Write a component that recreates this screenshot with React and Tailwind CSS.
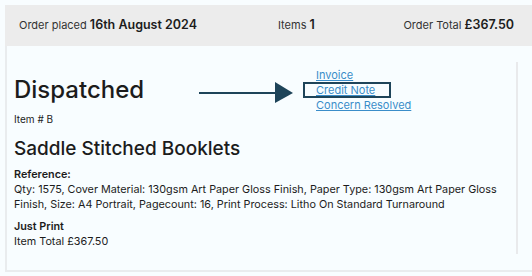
export default function App() {
  return (
    <div className="w-[532px] h-[276px] bg-[#f8fdff] pl-[5px] pt-[5px] overflow-hidden text-[#1c1c1c]" style={{ fontFamily: "Inter, 'Noto Sans', sans-serif" }}>
      <div className="flex h-[41px] items-center bg-[#ececec] pl-[14px] pr-[18px] text-[11px]">
        <div className="w-[259px]">
          <span className="text-[#333]">Order placed </span>
          <span className="text-[12.5px] font-semibold">16th August 2024</span>
        </div>
        <div>
          <span className="text-[#333]">Items </span>
          <span className="text-[12.5px] font-semibold">1</span>
        </div>
        <div className="ml-auto">
          <span className="text-[#333]">Order Total </span>
          <span className="text-[12.5px] font-semibold">£367.50</span>
        </div>
      </div>
      <div className="relative h-[226px] border-l-2 border-b-2 border-[#e9ecee] pl-[7px] pt-[29px]">
        <div className="absolute right-[14px] top-[16px] h-[192px] w-[2px] bg-[#e9eaec]" />
        <div className="flex">
          <div className="w-[302px]">
            <div className="relative h-[30px] text-[24px] leading-[30px] font-medium">
              Dispatched
              <svg className="absolute left-[185px] top-[7px]" width="96" height="22" viewBox="0 0 96 22">
                <rect x="0" y="10" width="78" height="2" fill="#1e4459" />
                <polygon points="76,0 94,11 76,21" fill="#1e4459" />
              </svg>
            </div>
            <div className="mt-[7px] text-[10px] leading-[14px]">Item # B</div>
          </div>
          <div className="-mt-[7px] flex flex-col text-[11px] leading-[15px] text-[#3a8dc9]">
            <a className="underline w-fit">Invoice</a>
            <div className="relative w-fit">
              <a className="underline">Credit Note</a>
              <span className="absolute left-[-13px] top-[-1px] h-[16px] w-[88px] border-2 border-[#1e4459]" />
            </div>
            <a className="underline w-fit">Concern Resolved</a>
          </div>
        </div>
        <div className="mt-[11px] text-[19px] leading-[24px] font-medium">Saddle Stitched Booklets</div>
        <div className="mt-[6px] w-[495px] text-[10.8px] leading-[15px]">
          <div className="font-semibold">Reference:</div>
          <div>Qty: 1575, Cover Material: 130gsm Art Paper Gloss Finish, Paper Type: 130gsm Art Paper Gloss Finish, Size: A4 Portrait, Pagecount: 16, Print Process: Litho On Standard Turnaround</div>
          <div className="mt-[7px] font-semibold">Just Print</div>
          <div>Item Total £367.50</div>
        </div>
      </div>
    </div>
  );
}
